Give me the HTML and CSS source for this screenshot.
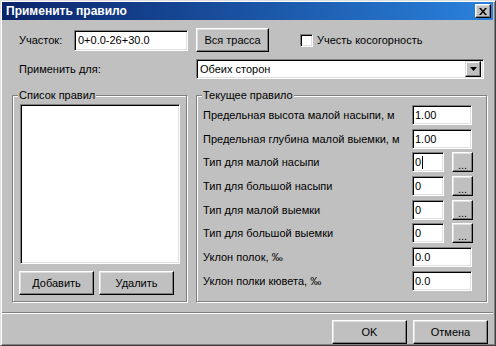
FILE: index.html
```html
<!DOCTYPE html>
<html>

	<head>
		<meta charset="UTF-8">
		<title>Применить правило</title>
		<link rel="stylesheet" href="styles.css">
	</head>

	<body>
		<div class="window">
			<div class="title">
				<span>Применить правило</span>
				<button class="close">
					<svg width="8" height="7" viewBox="0 0 8 7"><path d="M0 0h2l2 2.5 2-2.5h2l-3 3.5 3 3.5h-2l-2-2.5-2 2.5h-2l3-3.5z" fill="#000"/></svg>
				</button>
			</div>
			<div class="content">
				<div class="row row-top">
					<span class="lbl-main">Участок:</span>
					<input class="field field-range" type="text" value="0+0.0-26+30.0">
					<button class="btn btn-all">Вся трасса</button>
					<span class="check"></span>
					<span class="check-lbl">Учесть косогорность</span>
				</div>
				<div class="row row-apply">
					<span class="lbl-apply">Применить для:</span>
					<div class="select">
						<span class="select-val">Обеих сторон</span>
						<span class="select-arrow"><svg width="7" height="4" viewBox="0 0 7 4"><path d="M0 0h7l-3.5 4z" fill="#000"/></svg></span>
					</div>
				</div>
				<div class="groups">
					<fieldset class="group group-list">
						<legend>Список правил</legend>
						<div class="listbox"></div>
						<div class="list-btns">
							<button class="btn btn-list">Добавить</button>
							<button class="btn btn-list">Удалить</button>
						</div>
					</fieldset>
					<fieldset class="group group-rule">
						<legend>Текущее правило</legend>
						<div class="params">
							<div class="param">
								<span class="param-lbl">Предельная высота малой насыпи, м</span>
								<input class="field field-num" type="text" value="1.00">
							</div>
							<div class="param">
								<span class="param-lbl">Предельная глубина малой выемки, м</span>
								<input class="field field-num" type="text" value="1.00">
							</div>
							<div class="param">
								<span class="param-lbl">Тип для малой насыпи</span>
								<div class="field field-type">0<span class="caret"></span></div>
								<button class="btn btn-dots">...</button>
							</div>
							<div class="param">
								<span class="param-lbl">Тип для большой насыпи</span>
								<input class="field field-type" type="text" value="0">
								<button class="btn btn-dots">...</button>
							</div>
							<div class="param">
								<span class="param-lbl">Тип для малой выемки</span>
								<input class="field field-type" type="text" value="0">
								<button class="btn btn-dots">...</button>
							</div>
							<div class="param">
								<span class="param-lbl">Тип для большой выемки</span>
								<input class="field field-type" type="text" value="0">
								<button class="btn btn-dots">...</button>
							</div>
							<div class="param">
								<span class="param-lbl">Уклон полок, ‰</span>
								<input class="field field-num" type="text" value="0.0">
							</div>
							<div class="param">
								<span class="param-lbl">Уклон полки кювета, ‰</span>
								<input class="field field-num" type="text" value="0.0">
							</div>
						</div>
					</fieldset>
				</div>
			</div>
			<div class="sep"></div>
			<div class="footer">
				<button class="btn btn-dlg">OK</button>
				<button class="btn btn-dlg">Отмена</button>
			</div>
		</div>
	</body>

</html>
```

FILE: styles.css
```css
body {
	margin: 0;
	padding: 0;
	background: #c0c0c0;
	font: 11px "Liberation Sans", Arial, sans-serif;
	color: #000000;
}

button,
input {
	font: inherit;
	color: #000000;
	margin: 0;
	outline: none;
}

.window {
	width: 496px;
	height: 346px;
	box-sizing: border-box;
	border: 1px solid;
	border-color: #dfdfdf #404040 #404040 #dfdfdf;
	box-shadow: inset 1px 1px #ffffff, inset -1px -1px #808080;
	padding: 1px 2px 2px 1px;
	background: #c0c0c0;
	overflow: hidden;
}

.title {
	height: 18px;
	padding: 0 2px 0 4px;
	background: linear-gradient(to right, #0a246a, #2a82dc);
	color: #ffffff;
	font-size: 12px;
	font-weight: bold;
	display: flex;
	align-items: center;
	justify-content: space-between;
}

.close {
	width: 16px;
	height: 14px;
	padding: 0;
	background: #c0c0c0;
	border: 1px solid;
	border-color: #ffffff #000000 #000000 #ffffff;
	box-shadow: inset -1px -1px #808080, inset 1px 1px #dfdfdf;
	display: flex;
	align-items: center;
	justify-content: center;
}

.content {
	padding-left: 10px;
}

.row {
	display: flex;
	align-items: center;
}

.row-top {
	margin-top: 8px;
	height: 24px;
}

.lbl-main {
	width: 55px;
	margin-left: 7px;
}

/* sunken edit field */
.field {
	box-sizing: border-box;
	height: 20px;
	padding: 0 0 0 2px;
	background: #ffffff;
	border: 1px solid;
	border-color: #808080 #ffffff #ffffff #808080;
	box-shadow: inset 1px 1px #000000, inset -1px -1px #dfdfdf;
	display: flex;
	align-items: center;
}

.field-range {
	width: 114px;
	height: 21px;
	padding-left: 3px;
}

.btn {
	box-sizing: border-box;
	padding: 0;
	background: #c0c0c0;
	border: 1px solid;
	border-color: #ffffff #000000 #000000 #ffffff;
	box-shadow: inset -1px -1px #808080, inset 1px 1px #dfdfdf;
}

.btn-all {
	width: 73px;
	height: 24px;
	margin-left: 8px;
}

.check {
	width: 13px;
	height: 13px;
	box-sizing: border-box;
	margin-left: 31px;
	background: #ffffff;
	border: 1px solid;
	border-color: #808080 #ffffff #ffffff #808080;
	box-shadow: inset 1px 1px #000000, inset -1px -1px #dfdfdf;
}

.check-lbl {
	margin-left: 4px;
}

.row-apply {
	margin-top: 7px;
	height: 20px;
}

.lbl-apply {
	width: 177px;
	margin-left: 7px;
}

.select {
	width: 288px;
	height: 20px;
	box-sizing: border-box;
	padding: 2px 2px 2px 3px;
	background: #ffffff;
	border: 1px solid;
	border-color: #808080 #ffffff #ffffff #808080;
	box-shadow: inset 1px 1px #000000, inset -1px -1px #dfdfdf;
	display: flex;
	align-items: center;
	justify-content: space-between;
}

.select-arrow {
	width: 16px;
	height: 16px;
	box-sizing: border-box;
	background: #c0c0c0;
	border: 1px solid;
	border-color: #dfdfdf #000000 #000000 #dfdfdf;
	box-shadow: inset -1px -1px #808080, inset 1px 1px #ffffff;
	display: flex;
	align-items: center;
	justify-content: center;
}

.groups {
	display: flex;
	gap: 9px;
	margin-top: 9px;
}

.group {
	box-sizing: border-box;
	height: 214px;
	margin: 0;
	min-width: 0;
	border: 1px solid #808080;
	box-shadow: inset 1px 1px #ffffff, 1px 1px #ffffff;
}

.group legend {
	padding: 0 1px;
	margin-left: -2px;
	line-height: 14px;
	background: #c0c0c0;
}

.group-list {
	width: 175px;
	padding: 2px 0 0 7px;
}

.listbox {
	width: 160px;
	height: 160px;
	box-sizing: border-box;
	background: #ffffff;
	border: 1px solid;
	border-color: #808080 #ffffff #ffffff #808080;
	box-shadow: inset 1px 1px #000000, inset -1px -1px #dfdfdf;
}

.list-btns {
	display: flex;
	gap: 5px;
	margin: 7px 0 0 -1px;
}

.btn-list {
	width: 75px;
	height: 24px;
}

.group-rule {
	width: 291px;
	padding: 3px 0 0 6px;
}

.group-rule legend {
	margin-left: -1px;
}

.params {
	display: flex;
	flex-direction: column;
	gap: 3.7px;
}

.param {
	display: flex;
	align-items: center;
	height: 20px;
}

.param-lbl {
	width: 209px;
	white-space: nowrap;
}

.field-num {
	width: 60px;
}

.field-type {
	width: 32px;
}

.caret {
	width: 1px;
	height: 13px;
	margin-left: 1px;
	background: #000000;
}

.btn-dots {
	width: 21px;
	height: 20px;
	margin-left: 8px;
	font-size: 11px;
	line-height: 20px;
	padding-top: 2px;
}

.sep {
	margin-top: 10px;
	border-top: 1px solid #808080;
	border-bottom: 1px solid #ffffff;
}

.footer {
	display: flex;
	justify-content: flex-end;
	gap: 6px;
	margin-top: 6px;
	padding-right: 5px;
}

.btn-dlg {
	width: 75px;
	height: 24px;
}
```
